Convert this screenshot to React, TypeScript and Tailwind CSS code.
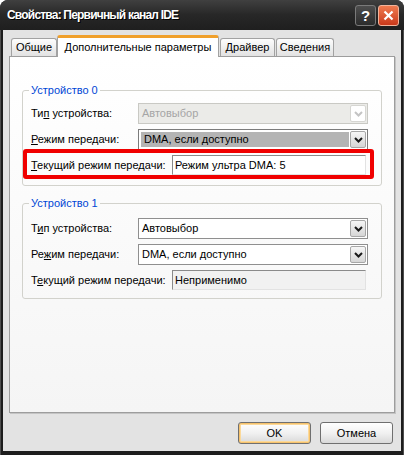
import clsx from "clsx";

function Chevron({ disabled }: { disabled?: boolean }) {
  return (
    <svg width="9" height="6" viewBox="0 0 9 6" aria-hidden="true">
      <polyline
        points="1,1 4.5,4.5 8,1"
        fill="none"
        stroke={disabled ? "#c4c4c4" : "#1a1a1a"}
        strokeWidth="2"
      />
    </svg>
  );
}

function Combo({
  value,
  disabled,
  selected,
}: {
  value: string;
  disabled?: boolean;
  selected?: boolean;
}) {
  return (
    <div
      className={clsx(
        "flex h-[21px] flex-1 items-stretch border",
        disabled
          ? "border-[#c9c9c4] bg-[#ebebe8] text-[#a5a5a5]"
          : selected
            ? "border-[#7c7c7c] bg-white text-black"
            : "border-[#8f8f8f] bg-white text-black",
      )}
    >
      <div
        className={clsx(
          "flex flex-1 items-center pl-[3px]",
          selected ? "m-[2px] mr-[1px] bg-[#b4b4b4] pl-[1px]" : "",
        )}
      >
        {value}
      </div>
      <div
        className={clsx(
          "m-[1px] ml-0 flex w-[16px] items-center justify-center rounded-[2px] border",
          disabled
            ? "border-[#d6d6d2] bg-white"
            : "border-[#a7a7a7] bg-linear-to-b from-[#f6f6f6] to-[#d6d6d6]",
        )}
      >
        <Chevron disabled={disabled} />
      </div>
    </div>
  );
}

function Field({ value, disabled }: { value: string; disabled?: boolean }) {
  return (
    <div
      className={clsx(
        "flex h-[20px] w-[194px] items-center border border-t-[#8a8a8a] border-l-[#8a8a8a] border-r-[#e2e2e2] border-b-[#e2e2e2] pl-[2px] text-black",
        disabled ? "bg-[#f1f1f1]" : "bg-white",
      )}
    >
      {value}
    </div>
  );
}

function Row({ label, children, wide }: { label: React.ReactNode; children: React.ReactNode; wide?: boolean }) {
  return (
    <div className="flex items-center">
      <div className={clsx("shrink-0 text-black", wide ? "w-[141px]" : "w-[107px]")}>{label}</div>
      {children}
    </div>
  );
}

function Tab({ label, width }: { label: string; width: string }) {
  return (
    <div
      className={clsx(
        "flex h-[18px] items-center justify-center rounded-t-[3px] border border-b-0 border-[#a2a2a2] bg-linear-to-b from-[#fdfdfd] to-[#e2e2e2] text-black",
        width,
      )}
    >
      {label}
    </div>
  );
}

function Button({ label, isDefault }: { label: string; isDefault?: boolean }) {
  return (
    <div
      className={clsx(
        "flex h-[22px] w-[73px] items-center justify-center rounded-[3px] border border-[#6f6f6f] bg-linear-to-b from-[#ffffff] via-[#f1f1f1] to-[#d9d9d9] text-black",
        isDefault && "shadow-[inset_0_0_0_1px_#f6c26c,inset_0_0_0_2px_#fbd99a]",
      )}
    >
      {label}
    </div>
  );
}

export default function App() {
  return (
    <div className="flex h-[455px] w-[404px] flex-col overflow-hidden rounded-t-[8px] bg-[#1d1d1d] text-[11px] leading-[13px] [font-family:'Liberation_Sans',Arial,sans-serif]">
      {/* title bar */}
      <div className="flex h-[30px] shrink-0 items-center bg-linear-to-b from-[#404040] via-[#272727] to-[#1f1f1f] pl-[7px] pr-[5px]">
        <div className="flex-1 text-[12px] font-bold tracking-[-0.8px] text-white [text-shadow:1px_1px_0_#000]">
          Свойства: Первичный канал IDE
        </div>
        <div className="flex items-center gap-[2px]">
          <div className="flex h-[21px] w-[21px] items-center justify-center rounded-[3px] border border-[#7a7a7a] bg-linear-to-b from-[#4e4e4e] to-[#2c2c2c] text-[15px] font-bold text-white">
            ?
          </div>
          <div className="flex h-[21px] w-[21px] items-center justify-center rounded-[3px] border border-[#f2b49c] bg-linear-to-b from-[#ef7a4f] to-[#c9381a]">
            <svg width="11" height="11" viewBox="0 0 11 11" aria-hidden="true">
              <path d="M1.5 1.5 L9.5 9.5 M9.5 1.5 L1.5 9.5" stroke="#fff" strokeWidth="2.2" />
            </svg>
          </div>
        </div>
      </div>

      {/* frame + body */}
      <div className="flex flex-1 flex-col px-[3px] pb-[4px] shadow-[inset_1px_0_0_#4d4d4d,inset_-1px_0_0_#4d4d4d]">
        <div className="flex flex-1 flex-col bg-[#e3e3e3] px-[6px] pt-[5px]">
          {/* tabs */}
          <div className="flex h-[21px] items-end pl-[2px]">
            <Tab label="Общие" width="w-[46px]" />
            <div className="relative z-10 -mb-px flex h-[22px] w-[162px] items-center justify-center rounded-t-[3px] border-x border-[#a2a2a2] border-t-[3px] border-t-[#f0a02c] bg-white pb-[1px] text-black">
              Дополнительные параметры
            </div>
            <div className="w-px" />
            <Tab label="Драйвер" width="w-[55px]" />
            <div className="w-px" />
            <Tab label="Сведения" width="w-[58px]" />
          </div>

          {/* panel */}
          <div className="flex h-[357px] flex-col border border-[#9d9d9d] bg-linear-to-b from-[#ffffff] to-[#f5f5f5] px-[12px] shadow-[1px_1px_0_#c4c4c4]">
            <fieldset className="mt-[27px] rounded-[3px] border border-[#d2d2cc] pb-[10px] pl-[8px] pr-[13px]">
              <legend className="ml-[-2px] px-[2px] text-[#0046d5]">Устройство 0</legend>
              <div className="flex flex-col pt-[6px]">
                <Row
                  label={
                    <>
                      Ти<u className="underline">п</u> устройства:
                    </>
                  }
                >
                  <Combo value="Автовыбор" disabled />
                </Row>
                <div className="mt-[5px]">
                  <Row
                    label={
                      <>
                        <u className="underline">Р</u>ежим передачи:
                      </>
                    }
                  >
                    <Combo value="DMA, если доступно" selected />
                  </Row>
                </div>
                <div className="relative mt-[5px]">
                  <Row
                    wide
                    label={
                      <>
                        <u className="underline">Т</u>екущий режим передачи:
                      </>
                    }
                  >
                    <Field value="Режим ультра DMA: 5" />
                  </Row>
                  <div className="pointer-events-none absolute -left-[8px] -right-[6px] -top-[6px] -bottom-[4px] rounded-[3px] border-[4px] border-[#f00000]" />
                </div>
              </div>
            </fieldset>

            <fieldset className="mt-[11px] rounded-[3px] border border-[#d2d2cc] pb-[8px] pl-[8px] pr-[13px]">
              <legend className="ml-[-2px] px-[2px] text-[#0046d5]">Устройство 1</legend>
              <div className="flex flex-col pt-[8px]">
                <Row
                  label={
                    <>
                      Т<u className="underline">и</u>п устройства:
                    </>
                  }
                >
                  <Combo value="Автовыбор" />
                </Row>
                <div className="mt-[5px]">
                  <Row
                    label={
                      <>
                        Ре<u className="underline">ж</u>им передачи:
                      </>
                    }
                  >
                    <Combo value="DMA, если доступно" />
                  </Row>
                </div>
                <div className="mt-[5px]">
                  <Row
                    wide
                    label={
                      <>
                        Т<u className="underline">е</u>кущий режим передачи:
                      </>
                    }
                  >
                    <Field value="Неприменимо" disabled />
                  </Row>
                </div>
              </div>
            </fieldset>
          </div>

          {/* buttons */}
          <div className="mt-[9px] flex justify-end gap-[9px] pr-[2px]">
            <Button label="OK" isDefault />
            <Button label="Отмена" />
          </div>
        </div>
      </div>
    </div>
  );
}
